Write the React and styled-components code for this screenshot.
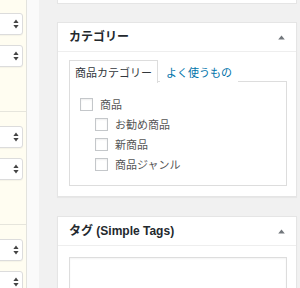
import React from "react";
import styled, { createGlobalStyle } from "styled-components";

const Global = createGlobalStyle`
  html, body { margin: 0; padding: 0; }
  body {
    width: 300px;
    height: 288px;
    overflow: hidden;
    background: #f1f1f1;
    font-family: "Liberation Sans", "Noto Sans CJK JP", sans-serif;
  }
`;

const Page = styled.div`
  display: flex;
  width: 300px;
  height: 288px;
  overflow: hidden;
  background: #f1f1f1;
`;

const LeftCol = styled.div`
  width: 39px;
  flex: none;
  display: flex;
  background: #fafafa;
`;

const YellowCol = styled.div`
  width: 26px;
  flex: none;
  border-right: 1px solid #e3e3de;
  display: flex;
  flex-direction: column;
  margin-top: -1px;
`;

const Block = styled.div`
  height: 113px;
  flex: none;
  box-sizing: border-box;
  border-bottom: 1px solid #e6e5dc;
  background: #fffdf1;
  padding: 14px 3px 0 0;
  display: flex;
  flex-direction: column;
  align-items: flex-end;
  gap: 10px;
`;

const Select = styled.div`
  width: 32px;
  height: 22px;
  box-sizing: border-box;
  border: 1px solid #dcdcdc;
  border-radius: 3px;
  background: #fff;
  box-shadow: 0 1px 1px rgba(0, 0, 0, 0.04);
  display: flex;
  align-items: center;
  justify-content: flex-end;
  padding-right: 3px;
`;

const RightCol = styled.div`
  width: 240px;
  flex: none;
  margin-left: 18px;
  display: flex;
  flex-direction: column;
`;

const TopStub = styled.div`
  height: 4px;
  flex: none;
  box-sizing: border-box;
  background: #fff;
  border: 1px solid #e5e5e5;
  border-top: none;
  margin-bottom: 18px;
`;

const Panel = styled.div`
  flex: none;
  background: #fff;
  border: 1px solid #e5e5e5;
  box-shadow: 0 1px 1px rgba(0, 0, 0, 0.04);
  margin-bottom: ${(p) => p.$gap || 0}px;
`;

const Header = styled.div`
  height: 28px;
  border-bottom: 1px solid #eee;
  display: flex;
  align-items: center;
  justify-content: space-between;
  padding: 0 11px 0 11px;
`;

const Title = styled.h2`
  margin: 0;
  font-size: 12px;
  font-weight: bold;
  line-height: 16px;
  color: #23282d;
  font-family: "Liberation Sans", "Noto Sans CJK JP", sans-serif;
`;

const Body = styled.div`
  padding: ${(p) => p.$top}px 9px 10px 11px;
`;

const Tabs = styled.div`
  display: flex;
  align-items: stretch;
  height: 22px;
  position: relative;
  z-index: 1;
  margin-bottom: -1px;
`;

const Tab = styled.div`
  box-sizing: border-box;
  height: 23px;
  padding: 0 5px;
  display: flex;
  align-items: center;
  font-size: 11px;
  line-height: 14px;
  font-family: "Noto Sans CJK JP", sans-serif;
  color: ${(p) => (p.$active ? "#32373c" : "#0073aa")};
  background: #fff;
  border: 1px solid ${(p) => (p.$active ? "#dddddd" : "transparent")};
  border-bottom: none;
  margin-left: ${(p) => (p.$active ? 0 : 2)}px;
`;

const TabBox = styled.div`
  height: 105px;
  box-sizing: border-box;
  border: 1px solid #dddddd;
  background: #fff;
  padding: 12px 10px 0 10px;
`;

const Row = styled.div`
  height: 20px;
  display: flex;
  align-items: center;
  padding-left: ${(p) => p.$indent || 0}px;
`;

const Check = styled.span`
  width: 13px;
  height: 13px;
  box-sizing: border-box;
  flex: none;
  border: 1px solid #c4c7ca;
  background: #fff;
  box-shadow: inset 0 1px 2px rgba(0, 0, 0, 0.07);
`;

const Label = styled.span`
  margin-left: 7px;
  font-size: 11px;
  line-height: 14px;
  color: #555;
  font-family: "Noto Sans CJK JP", sans-serif;
`;

const Input = styled.div`
  height: 32px;
  box-sizing: border-box;
  border: 1px solid #dddddd;
  background: #fff;
  box-shadow: inset 0 1px 2px rgba(0, 0, 0, 0.05);
`;

const Arrow = () => (
  <svg width="6" height="10" viewBox="0 0 6 10">
    <path d="M3 0.5 L5.6 4 H0.4 Z" fill="#444" />
    <path d="M3 9.5 L5.6 6 H0.4 Z" fill="#444" />
  </svg>
);

const Caret = () => (
  <svg width="7" height="5" viewBox="0 0 7 5">
    <path d="M3.5 0.5 L6.8 4.5 H0.2 Z" fill="#72777c" />
  </svg>
);

const items = [
  { label: "商品", indent: 0 },
  { label: "お勧め商品", indent: 15 },
  { label: "新商品", indent: 15 },
  { label: "商品ジャンル", indent: 15 },
];

export default function App() {
  return (
    <>
      <Global />
      <Page>
        <LeftCol>
          <YellowCol>
            {[0, 1, 2].map((b) => (
              <Block key={b}>
                <Select><Arrow /></Select>
                <Select><Arrow /></Select>
              </Block>
            ))}
          </YellowCol>
        </LeftCol>
        <RightCol>
          <TopStub />
          <Panel $gap={19}>
            <Header>
              <Title>カテゴリー</Title>
              <Caret />
            </Header>
            <Body $top={8}>
              <Tabs>
                <Tab $active>商品カテゴリー</Tab>
                <Tab>よく使うもの</Tab>
              </Tabs>
              <TabBox>
                {items.map((it) => (
                  <Row key={it.label} $indent={it.indent}>
                    <Check />
                    <Label>{it.label}</Label>
                  </Row>
                ))}
              </TabBox>
            </Body>
          </Panel>
          <Panel>
            <Header>
              <Title>タグ (Simple Tags)</Title>
              <Caret />
            </Header>
            <Body $top={11}>
              <Input />
            </Body>
          </Panel>
        </RightCol>
      </Page>
    </>
  );
}
